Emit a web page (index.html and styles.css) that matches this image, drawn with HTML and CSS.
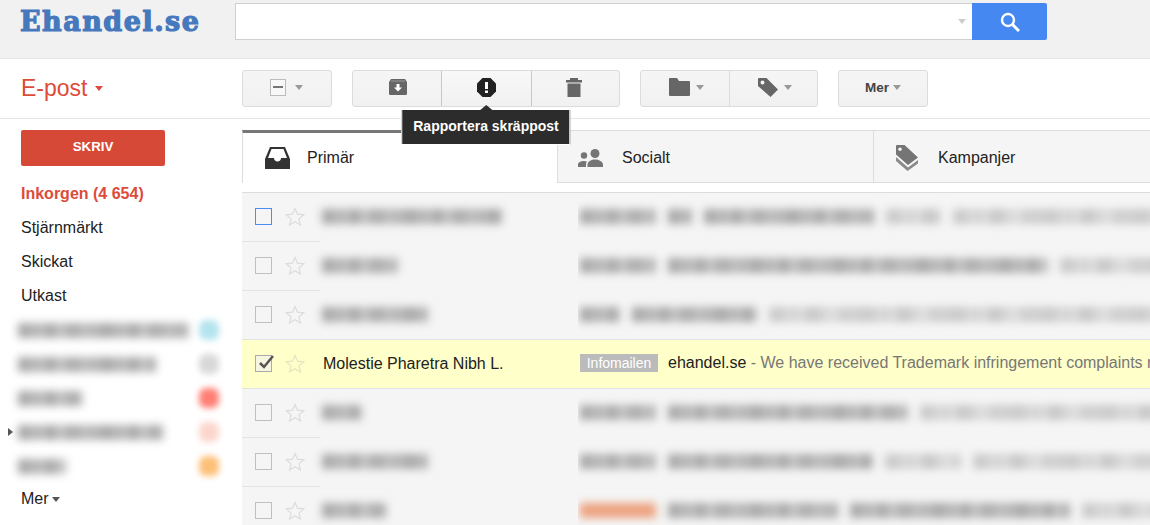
FILE: index.html
```html
<!DOCTYPE html>
<html lang="sv">
<head>
    <meta charset="UTF-8">
    <title>Ehandel.se - E-post</title>
    <link rel="stylesheet" href="styles.css">
</head>
<body>
    <header class="top">
        <div class="logo">Ehandel.se</div>
        <div class="search">
            <div class="search-box"><span class="arrow arrow-light"></span></div>
            <button class="search-btn">
                <svg width="20" height="20" viewBox="0 0 20 20"><circle cx="8" cy="8" r="6" fill="none" stroke="#fff" stroke-width="2.4"/><path d="M12.5 12.5L19 19" stroke="#fff" stroke-width="3"/></svg>
            </button>
        </div>
    </header>

    <div class="bar">
        <div class="brand">E-post <span class="arrow arrow-red"></span></div>
        <div class="tools">
            <div class="btn-group group-one">
                <button class="btn btn-select"><span class="mixed"></span><span class="arrow"></span></button>
            </div>
            <div class="btn-group group-three">
                <button class="btn btn-archive">
                    <svg width="18" height="16" viewBox="0 0 18 16"><path d="M2 0h14l2 3v11.5a1.5 1.5 0 0 1-1.5 1.5h-15A1.5 1.5 0 0 1 0 14.5V3z" fill="#666"/><path d="M2 1.500h14v1H2z" fill="#999"/><path d="M7.5 5h3v3.5H13L9 12.500 5 8.500h2.500z" fill="#fff"/></svg>
                </button>
                <button class="btn btn-active">
                    <svg width="19" height="19" viewBox="0 0 19 19"><path d="M5.5 0h8L19 5.500v8L13.500 19h-8L0 13.500v-8z" fill="#222"/><path d="M8 4h3v7H8zM8 12.500h3V15H8z" fill="#fff"/></svg>
                    <div class="tooltip">Rapportera skräppost</div>
                </button>
                <button class="btn btn-trash">
                    <svg width="16" height="19" viewBox="0 0 16 19"><path d="M4 0h8v2h4v2.500H0V2h4zM1.500 5.500h13V19h-13z" fill="#666"/></svg>
                </button>
            </div>
            <div class="btn-group group-two">
                <button class="btn btn-icon-arrow">
                    <svg width="21" height="18" viewBox="0 0 21 18"><path d="M1 0h7l2 3h10a1 1 0 0 1 1 1v13a1 1 0 0 1-1 1H1a1 1 0 0 1-1-1V1a1 1 0 0 1 1-1z" fill="#666"/></svg>
                    <span class="arrow"></span>
                </button>
                <button class="btn btn-icon-arrow">
                    <svg width="20" height="19" viewBox="0 0 20 19"><path fill-rule="evenodd" d="M1 0h7.500L20 11.500 12.500 19 0 8V1a1 1 0 0 1 1-1zm3.500 2.500a2 2 0 1 0 0 4 2 2 0 0 0 0-4z" fill="#666"/></svg>
                    <span class="arrow"></span>
                </button>
            </div>
            <div class="btn-group group-one">
                <button class="btn btn-more">Mer <span class="arrow"></span></button>
            </div>
        </div>
    </div>

    <div class="layout">
        <aside class="sidebar">
            <button class="compose">SKRIV</button>
            <nav class="nav">
                <a class="nav-item nav-current">Inkorgen (4 654)</a>
                <a class="nav-item">Stjärnmärkt</a>
                <a class="nav-item">Skickat</a>
                <a class="nav-item">Utkast</a>
                <div class="nav-item label"><span class="smear w170"></span><span class="dot dot-blue"></span></div>
                <div class="nav-item label"><span class="smear w138"></span><span class="dot dot-gray"></span></div>
                <div class="nav-item label"><span class="smear w64"></span><span class="dot dot-red"></span></div>
                <div class="nav-item label has-sub"><span class="smear w145"></span><span class="dot dot-pink"></span></div>
                <div class="nav-item label"><span class="smear w48"></span><span class="dot dot-orange"></span></div>
                <a class="nav-item nav-more">Mer <span class="arrow arrow-dark"></span></a>
            </nav>
        </aside>

        <main class="mail">
            <div class="tabs">
                <div class="tab tab-current">
                    <svg width="25" height="22" viewBox="0 0 25 22"><path fill-rule="evenodd" d="M5 0h15l5 12v10H0V12zM6.500 2L3 11h6c0 2 1.500 3.500 3.500 3.500S16 13 16 11h6L18.500 2z" fill="#333"/></svg>
                    <span>Primär</span>
                </div>
                <div class="tab">
                    <svg width="26" height="18" viewBox="0 0 26 18"><circle cx="17" cy="4.500" r="4.500" fill="#757575"/><circle cx="6" cy="6.500" r="3.200" fill="#757575"/><path d="M0 18v-2.500c0-2 3-3.500 6-3.500 1 0 2 .2 3 .5-.7.8-1 1.800-1 3V18zM9.500 18v-2.500c0-3 4-5 7.500-5s8 2 8 5V18z" fill="#757575"/></svg>
                    <span>Socialt</span>
                </div>
                <div class="tab tab-last">
                    <svg width="22" height="26" viewBox="0 0 22 26"><path fill-rule="evenodd" d="M1 0h7.500L22 12.500 12 20 0 9.500V1a1 1 0 0 1 1-1zm3 2.500a1.800 1.800 0 1 0 0 3.600 1.800 1.800 0 0 0 0-3.600z" fill="#757575"/><path d="M0 12l12 10.500L22 15v3.500L11.500 26 0 16z" fill="#8a8a8a"/></svg>
                    <span>Kampanjer</span>
                </div>
            </div>

            <div class="rows">
                <div class="row">
                    <div class="ctrl"><span class="check check-focus"></span><svg class="star" viewBox="0 0 20 20"><path d="M10 1.500l2.500 5.700 6.200.6-4.700 4.100 1.400 6.100-5.400-3.200-5.400 3.200 1.400-6.100L1.300 7.800l6.200-.6z"/></svg></div>
                    <div class="sender"><span class="smear w180"></span></div>
                    <div class="subject"><span class="smear w76"></span><span class="smear w24"></span><span class="smear w170"></span><span class="smear w55 pale"></span><span class="smear w220 pale"></span></div>
                </div>
                <div class="row">
                    <div class="ctrl"><span class="check"></span><svg class="star" viewBox="0 0 20 20"><path d="M10 1.500l2.500 5.700 6.200.6-4.700 4.100 1.400 6.100-5.400-3.200-5.400 3.200 1.400-6.100L1.300 7.800l6.200-.6z"/></svg></div>
                    <div class="sender"><span class="smear w76"></span></div>
                    <div class="subject"><span class="smear w76"></span><span class="smear w380"></span><span class="smear w100 pale"></span></div>
                </div>
                <div class="row">
                    <div class="ctrl"><span class="check"></span><svg class="star" viewBox="0 0 20 20"><path d="M10 1.500l2.500 5.700 6.200.6-4.700 4.100 1.400 6.100-5.400-3.200-5.400 3.200 1.400-6.100L1.300 7.800l6.200-.6z"/></svg></div>
                    <div class="sender"><span class="smear w106"></span></div>
                    <div class="subject"><span class="smear w40"></span><span class="smear w125"></span><span class="smear w400 pale"></span></div>
                </div>
                <div class="row row-selected">
                    <div class="ctrl">
                        <span class="check check-on"><svg width="19" height="17" viewBox="0 0 19 17"><path d="M4 9l4 4L17 2" fill="none" stroke="#555" stroke-width="2.500"/></svg></span>
                        <svg class="star" viewBox="0 0 20 20"><path d="M10 1.500l2.500 5.700 6.200.6-4.700 4.100 1.400 6.100-5.400-3.200-5.400 3.200 1.400-6.100L1.300 7.800l6.200-.6z"/></svg>
                    </div>
                    <div class="sender sender-text">Molestie Pharetra Nibh L.</div>
                    <div class="subject subject-text">
                        <span class="badge">Infomailen</span>
                        <span class="subject-line">ehandel.se <span class="snippet">- We have received Trademark infringement complaints regarding</span></span>
                    </div>
                </div>
                <div class="row">
                    <div class="ctrl"><span class="check"></span><svg class="star" viewBox="0 0 20 20"><path d="M10 1.500l2.500 5.700 6.200.6-4.700 4.100 1.400 6.100-5.400-3.200-5.400 3.200 1.400-6.100L1.300 7.800l6.200-.6z"/></svg></div>
                    <div class="sender"><span class="smear w40"></span></div>
                    <div class="subject"><span class="smear w76"></span><span class="smear w240"></span><span class="smear w240 pale"></span></div>
                </div>
                <div class="row">
                    <div class="ctrl"><span class="check"></span><svg class="star" viewBox="0 0 20 20"><path d="M10 1.500l2.500 5.700 6.200.6-4.700 4.100 1.400 6.100-5.400-3.200-5.400 3.200 1.400-6.100L1.300 7.800l6.200-.6z"/></svg></div>
                    <div class="sender"><span class="smear w106"></span></div>
                    <div class="subject"><span class="smear w76"></span><span class="smear w205"></span><span class="smear w76 pale"></span><span class="smear w220 pale"></span></div>
                </div>
                <div class="row">
                    <div class="ctrl"><span class="check"></span><svg class="star" viewBox="0 0 20 20"><path d="M10 1.500l2.500 5.700 6.200.6-4.700 4.100 1.400 6.100-5.400-3.200-5.400 3.200 1.400-6.100L1.300 7.800l6.200-.6z"/></svg></div>
                    <div class="sender"><span class="smear w64"></span></div>
                    <div class="subject"><span class="smear w76 orange"></span><span class="smear w170"></span><span class="smear w220"></span><span class="smear w76 pale"></span></div>
                </div>
            </div>
        </main>
    </div>
</body>
</html>
```

FILE: styles.css
```css
* {
    box-sizing: border-box;
}

html, body {
    height: 525px;
}

body {
    margin: 0;
    overflow: hidden;
    background: white;
    color: #222;
    font-family: "Liberation Sans", Arial, sans-serif;
    font-size: 16px;
}

button {
    font-family: inherit;
    padding: 0;
    cursor: pointer;
}

/* small dropdown triangle, used everywhere */
.arrow {
    display: inline-block;
    flex: none;
    width: 0;
    height: 0;
    border-left: 4.5px solid transparent;
    border-right: 4.5px solid transparent;
    border-top: 5px solid #999;
}

.arrow-light { border-top-color: #ccc; }
.arrow-red { border-top-color: #dd4b39; }
.arrow-dark { border-top-color: #555; }

/* top header */
.top {
    display: flex;
    height: 59px;
    padding: 3px 0 0 20px;
    background: #f1f1f1;
    border-bottom: 1px solid #e5e5e5;
}

.logo {
    width: 215px;
    height: 38px;
    line-height: 38px;
    font-family: "DejaVu Serif", serif;
    font-size: 27px;
    font-weight: bold;
    letter-spacing: 1.5px;
    color: #4578bd;
    -webkit-text-stroke: 1.2px #4578bd;
}

.search {
    display: flex;
    height: 37px;
}

.search-box {
    display: flex;
    align-items: center;
    justify-content: flex-end;
    width: 737px;
    padding-right: 6px;
    background: white;
    border: 1px solid #d0d0d0;
    border-right: none;
}

.search-btn {
    display: flex;
    align-items: center;
    justify-content: center;
    width: 75px;
    background: #4688f1;
    border: none;
    border-radius: 0 2px 2px 0;
}

/* toolbar row */
.bar {
    display: flex;
    height: 60px;
    border-bottom: 1px solid #e5e5e5;
}

.brand {
    display: flex;
    align-items: center;
    gap: 8px;
    width: 242px;
    padding-left: 21px;
    font-size: 23px;
    color: #dd4b39;
}

.tools {
    display: flex;
    gap: 20px;
    padding-top: 11px;
}

.btn-group {
    display: flex;
    height: 37px;
    background: linear-gradient(#f5f5f5, #f1f1f1);
    border: 1px solid #dcdcdc;
    border-radius: 3px;
}

.group-one { width: 90px; }
.group-two { width: 178px; }
.group-three { width: 268px; }

.btn {
    position: relative;
    display: flex;
    flex: 1;
    align-items: center;
    justify-content: center;
    padding-bottom: 3px;
    background: none;
    border: none;
    border-left: 1px solid #dcdcdc;
}

.btn:first-child {
    border-left: none;
}

.btn-active {
    flex: 0 0 91px;
    border-left: 1px solid #c8c8c8;
    border-right: 1px solid #c8c8c8;
    background: linear-gradient(#f8f8f8, #f1f1f1);
}

.btn-active + .btn {
    border-left: none;
}

.btn-archive { padding-left: 3px; }
.btn-trash { padding-right: 3px; }

.btn-select {
    gap: 9px;
    padding-right: 2px;
}

.btn-icon-arrow {
    gap: 6px;
    padding-left: 4px;
}

.mixed {
    display: flex;
    align-items: center;
    justify-content: center;
    width: 16px;
    height: 17px;
    background: #f8f8f8;
    border: 1px solid #bbb;
}

.mixed::before {
    content: "";
    width: 10px;
    height: 2px;
    background: #777;
}

.btn-more {
    gap: 4px;
    font-size: 13.5px;
    font-weight: bold;
    color: #444;
}

/* tooltip under the spam button */
.tooltip {
    position: absolute;
    top: 39px;
    left: 50%;
    transform: translateX(-50%);
    z-index: 5;
    padding: 9px 11px 10px;
    background: #2c2c2c;
    color: white;
    font-size: 14px;
    font-weight: bold;
    line-height: 15px;
    white-space: nowrap;
    border: 1px solid #fff;
    border-width: 0 1px 1px;
}

.tooltip::before {
    content: "";
    position: absolute;
    top: -5px;
    left: 50%;
    margin-left: -6px;
    border-left: 6px solid transparent;
    border-right: 6px solid transparent;
    border-bottom: 5px solid #2c2c2c;
}

.layout {
    display: flex;
}

/* left column */
.sidebar {
    flex: 0 0 242px;
    padding: 11px 23px 0 21px;
}

.compose {
    display: block;
    width: 144px;
    height: 36px;
    padding-bottom: 3px;
    background: #d74937;
    color: white;
    border: none;
    border-radius: 2px;
    font-size: 13.3px;
    font-weight: bold;
}

.nav {
    margin-top: 11px;
}

.nav-item {
    display: flex;
    align-items: center;
    gap: 3px;
    height: 34px;
    color: #222;
}

.nav-current {
    color: #dd4b39;
    font-weight: bold;
}

.nav-more {
    margin-top: -1px;
}

.label {
    position: relative;
    justify-content: space-between;
    margin-left: -3px;
}

.has-sub::before {
    content: "";
    position: absolute;
    left: -10px;
    top: 13px;
    border-top: 4px solid transparent;
    border-bottom: 4px solid transparent;
    border-left: 5px solid #555;
}

.dot {
    width: 20px;
    height: 20px;
    border-radius: 7px;
    filter: blur(3px);
}

.dot-blue { background: #b4e4ee; }
.dot-gray { background: #d8d8d8; }
.dot-red { background: #ff7f74; }
.dot-pink { background: #fbd6cc; }
.dot-orange { background: #fdbf78; }

/* the blurred out text */
.smear {
    display: block;
    flex: none;
    height: 15px;
    background-image: linear-gradient(90deg, #a8a8a8 0 13px, #c6c6c6 13px 16px, #b0b0b0 16px 24px, #d2d2d2 24px 27px, #a4a4a4 27px 36px, #bcbcbc 36px 44px, #d6d6d6 44px 46px, #aeaeae 46px 64px, #c8c8c8 64px 67px, #b6b6b6 67px 83px);
    background-size: 83px 100%;
    filter: blur(4.5px);
}

.smear.pale {
    background-image: linear-gradient(90deg, #cacaca 0 16px, #dedede 16px 20px, #d2d2d2 20px 31px, #e4e4e4 31px 35px, #c8c8c8 35px 52px, #d8d8d8 52px 64px, #e2e2e2 64px 68px, #cecece 68px 91px);
    background-size: 91px 100%;
}

.smear.orange {
    background-image: none;
    background-color: #eca27f;
}

.w24 { width: 24px; }
.w40 { width: 40px; }
.w48 { width: 48px; }
.w55 { width: 55px; }
.w64 { width: 64px; }
.w76 { width: 76px; }
.w100 { width: 100px; }
.w106 { width: 106px; }
.w125 { width: 125px; }
.w138 { width: 138px; }
.w145 { width: 145px; }
.w170 { width: 170px; }
.w180 { width: 180px; }
.w205 { width: 205px; }
.w220 { width: 220px; }
.w240 { width: 240px; }
.w380 { width: 380px; }
.w400 { width: 400px; }

/* mail list */
.mail {
    flex: 1;
    min-width: 0;
    padding-top: 11px;
}

.tabs {
    display: flex;
    height: 53px;
}

.tab {
    display: flex;
    align-items: center;
    width: 316px;
    padding: 2px 0 0 20px;
    gap: 18px;
    background: #f5f5f5;
    border-top: 1px solid #ddd;
    border-bottom: 1px solid #ddd;
    border-right: 1px solid #ddd;
}

.tab-current {
    padding: 0 0 0 22px;
    gap: 17px;
    background: white;
    border-top: 3px solid #777;
    border-left: 1px solid #ddd;
    border-bottom: none;
}

.tab-last {
    flex: 1;
    padding-left: 22px;
    gap: 20px;
    border-right: none;
}

.rows {
    margin-top: 9px;
    border-top: 1px solid #dcdcdc;
}

.row {
    display: flex;
    height: 49px;
    background: #f5f5f5;
}

.ctrl {
    display: flex;
    align-items: center;
    flex: 0 0 78px;
    gap: 13px;
    padding: 0 0 2px 13px;
    border-bottom: 1px solid #e4e4e4;
}

.check {
    display: block;
    flex: none;
    width: 17px;
    height: 17px;
    border: 1px solid #c0c0c0;
}

.check-focus {
    border-color: #4a8cf0;
}

.check-on {
    background: #f5f5e0;
    border-color: #aaa;
}

.check-on svg {
    display: block;
    margin-top: -2px;
}

.star {
    flex: none;
    width: 20px;
    height: 20px;
    margin-top: 2px;
    fill: none;
    stroke: #dcdcdc;
    stroke-width: 1.2;
}

.sender {
    display: flex;
    align-items: center;
    flex: 0 0 258px;
    padding: 0 0 2px 2px;
}

.subject {
    display: flex;
    align-items: center;
    flex: 1;
    min-width: 0;
    gap: 12px;
    padding: 0 0 2px 2px;
    overflow: hidden;
}

.row-selected {
    background: #ffffc9;
    border-bottom: 1px solid #e4e4e4;
    box-shadow: 0 -1px 0 #e4e4e4;
}

.row-selected .ctrl {
    border-bottom: none;
}

.row-selected .star {
    stroke: #e4e4c0;
}

.sender-text {
    padding: 0 0 0 3px;
    white-space: nowrap;
}

.subject-text {
    gap: 10px;
    padding-bottom: 3px;
}

.badge {
    flex: none;
    width: 78px;
    height: 18px;
    line-height: 18px;
    background: #bbb;
    color: white;
    font-size: 14px;
    text-align: center;
}

.subject-line {
    white-space: nowrap;
}

.snippet {
    color: #777;
}
```
